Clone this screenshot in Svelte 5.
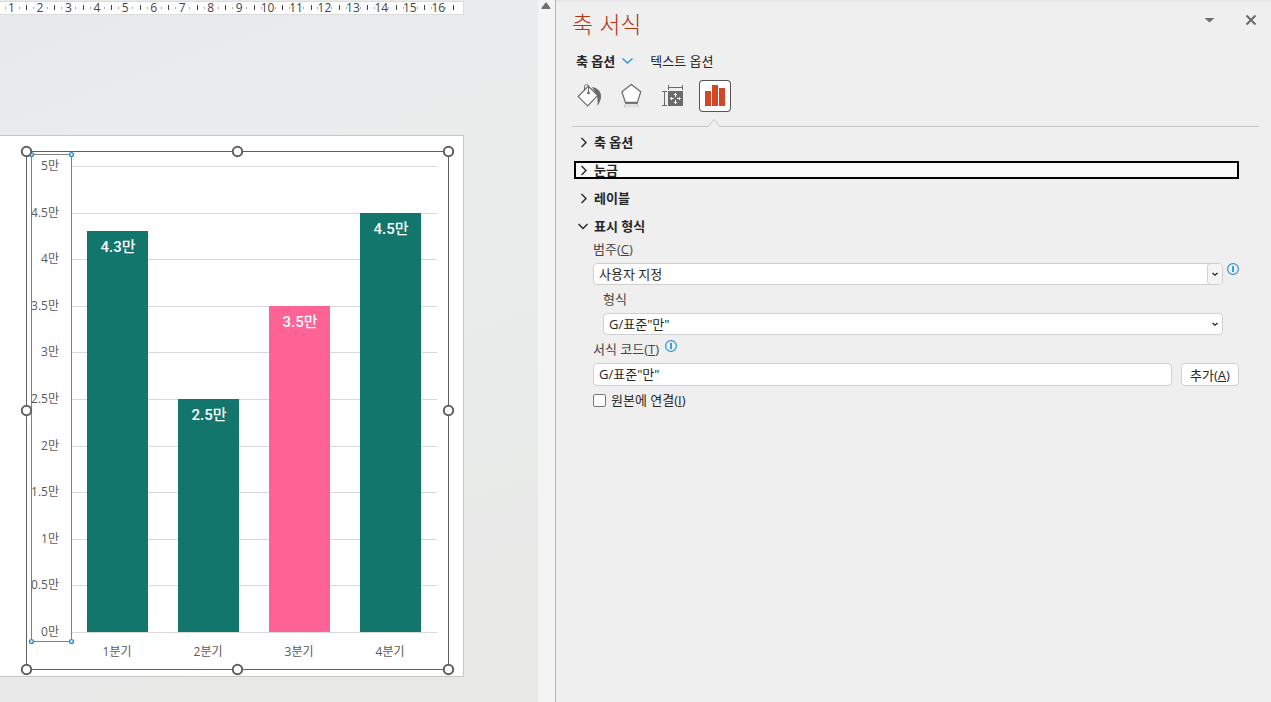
<script lang="ts">
  interface Bar { label: string; value: number; highlight?: boolean }

  const bars: Bar[] = [
    { label: '1분기', value: 4.3 },
    { label: '2분기', value: 2.5 },
    { label: '3분기', value: 3.5, highlight: true },
    { label: '4분기', value: 4.5 }
  ]
  const ticks = Array.from({ length: 11 }, (_, i) => i * 0.5)
  const marks = Array.from({ length: 16 }, (_, i) => i + 1)
  const handles = [[26, 15], [237, 15], [448, 15], [26, 274], [448, 274], [26, 533], [237, 533], [448, 533]]
  const axisHandles = [[31, 18], [71, 18], [31, 505], [71, 505]]

  // plot area of the chart, in slide pixels
  const base = 496
  const unit = 93.2
  const step = 91
  const y = (v: number) => Math.round(base - v * unit)
  const markX = (n: number) => 11.5 + (n - 1) * 28.45

  const closed = ['축 옵션', '눈금', '레이블']
  let category = $state('사용자 지정')
  let format = $state('G/표준"만"')
  let code = $state('G/표준"만"')
  let linked = $state(false)
</script>

{#snippet chevron(open: boolean)}
  <svg width="12" height="12" viewBox="0 0 12 12" fill="none" stroke="#262626" stroke-width="1.4">
    <path d={open ? 'M.5 4L5 8.500 9.500 4' : 'M3.500 2L8 6.500 3.500 11'} />
  </svg>
{/snippet}

{#snippet info()}
  <svg width="12" height="12" viewBox="0 0 12 12" fill="none" stroke="#2e93d1">
    <circle cx="6" cy="6" r="5.4" stroke-width="1.2" />
    <path d="M6 3v6" stroke-width="1.8" />
  </svg>
{/snippet}

{#snippet arrow()}
  <svg width="8" height="6" viewBox="0 0 8 6" fill="none" stroke="#222" stroke-width="1.3"><path d="M1.500 2L4 4.200 6.500 2" /></svg>
{/snippet}

<div class="app">
  <main class="work">
    <svg class="ruler" width="464" height="16" viewBox="0 0 464 16">
      <rect x="-1" y="1.5" width="464.5" height="13" fill="#fff" stroke="#dcdcdc" />
      {#each marks as n}
        <path d="M{Math.round(markX(n) - 7) + 0.5} 7v2M{Math.round(markX(n) + 7) + 0.5} 7v2" stroke="#aaa" />
        <path d="M{Math.floor(markX(n) + 15) + 0.5} 5v5" stroke="#444" />
        <text x={markX(n)} y="12" text-anchor="middle">{n}</text>
      {/each}
    </svg>

    <section class="slide">
      <svg width="463" height="540" viewBox="0 0 463 540">
        {#each ticks as t}
          <path d="M72 {y(t) + 0.5}H437" stroke="#d9d9d9" />
        {/each}
        <g fill="none" stroke="#606060">
          <rect x="26.5" y="15.5" width="422" height="518" />
          <rect x="31.5" y="18.5" width="40" height="487" stroke="#808080" />
        </g>
        {#each ticks as t}
          <text class="tick" x="59" y={y(t) + 4} text-anchor="end">{t}만</text>
        {/each}
        {#each bars as bar, i}
          <rect x={87 + i * step} y={y(bar.value)} width="61" height={base - y(bar.value)} fill={bar.highlight ? '#ff6295' : '#12766c'} />
          <text class="value" x={118 + i * step} y={y(bar.value) + 21} text-anchor="middle">{bar.value}만</text>
          <text class="tick" x={117 + i * step} y="520" text-anchor="middle">{bar.label}</text>
        {/each}
        {#each axisHandles as [cx, cy]}
          <circle cx={cx + 0.5} cy={cy + 0.5} r="1.9" fill="#fff" stroke="#2a8dd4" stroke-width="1.4" />
        {/each}
        {#each handles as [cx, cy]}
          <circle cx={cx + 0.5} cy={cy + 0.5} r="4.7" fill="#fff" stroke="#606060" stroke-width="2" />
        {/each}
      </svg>
    </section>
  </main>

  <div class="scroll">
    <svg width="10" height="8" viewBox="0 0 10 8"><path d="M5 0L9.500 6q.3 1-.7 1H1.200q-1 0-.7-1z" fill="#6e6e6e" /></svg>
  </div>

  <aside class="pane">
    <header>
      <h1>축 서식</h1>
      <button class="head-btn" aria-label="작업창 옵션">
        <svg width="16" height="16" viewBox="0 0 16 16"><path d="M3.500 6h10l-5 4.500z" fill="#6e6e6e" /></svg>
      </button>
      <button class="head-btn" aria-label="닫기">
        <svg width="16" height="16" viewBox="0 0 16 16"><path d="M3.500 3.500l9 9M12.500 3.500l-9 9" stroke="#6a6a6a" stroke-width="2" /></svg>
      </button>
    </header>

    <nav class="tabs">
      <button class="tab active">
        축 옵션
        <svg width="12" height="8" viewBox="0 0 12 8" fill="none" stroke="#2e93d1" stroke-width="1.4"><path d="M1.500 1.500l5 4.500 5-4.500" /></svg>
      </button>
      <button class="tab">텍스트 옵션</button>
    </nav>

    <div class="tools">
      <button class="tool" aria-label="채우기 및 선">
        <svg width="32" height="32" viewBox="0 0 32 32" fill="none" stroke="#6b6b6b">
          <path d="M19 7c6 1 9.500 5 9 10-.2 3-1.500 6-3.500 9 .2-4 .2-7-.5-10z" fill="#6b6b6b" stroke="none" />
          <path d="M15.300 6.200l9.300 9.100L14.700 26l-9.500-9.400z" fill="#fff" stroke-width="1.2" />
          <path d="M11.500 11V6.500c0-2.500 4-2.500 4 0V13" />
          <circle cx="15.500" cy="13" r="1.4" fill="#6b6b6b" stroke="none" />
        </svg>
      </button>
      <button class="tool" aria-label="효과">
        <svg width="32" height="32" viewBox="0 0 32 32" fill="none" stroke="#6b6b6b">
          <path d="M10.500 24h12l1 3.500h-14z" fill="#e2e2e2" stroke="none" />
          <path d="M10.300 24l-1 3.500M22.500 24l1 3.500" stroke="#c4c4c4" />
          <path d="M16.300 4.500l9.400 7.200L22.300 23H10.500L6.900 11.700z" fill="#fff" stroke-width="1.2" />
          <path d="M10.500 22.800h12" stroke-width="2" />
        </svg>
      </button>
      <button class="tool" aria-label="크기 및 속성">
        <svg width="32" height="32" viewBox="0 0 32 32" fill="none" stroke="#6b6b6b">
          <path d="M11.500 5v5M25.500 5v5M11.500 7.500h14M5 11.500h5M5 25.500h5M7.500 11.500v14" />
          <path d="M11 11h15v15H11z" fill="#6b6b6b" stroke="none" />
          <path d="M18.500 13.500V17M18.500 20v3.500M13.500 18.500H17M20 18.500h3.500M17 15l1.500-1.500L20 15M17 22l1.500 1.500L20 22M15 17l-1.500 1.500L15 20M22 17l1.500 1.500L22 20" stroke="#fff" />
        </svg>
      </button>
      <button class="tool active" aria-label="축 옵션">
        <svg width="32" height="32" viewBox="0 0 32 32" fill="#d24726"><path d="M6 11h6v15H6zM13 5h6v21h-6zM20 8h6v18h-6z" /></svg>
        <svg class="notch" width="14" height="9" viewBox="0 0 14 9" fill="#efefef" stroke="#c8c8c8"><path d="M1 9l6-8 6 8z" stroke="none" /><path d="M0 7.500h1L7 .5l6 7h1" /></svg>
      </button>
    </div>

    <div class="sections">
      {#each closed as name}
        <button class={['section', name === '눈금' && 'focused']} aria-expanded="false">{@render chevron(false)}{name}</button>
      {/each}
      <button class="section" aria-expanded="true">{@render chevron(true)}표시 형식</button>
    </div>

    <form class="fields">
      <label for="category">범주(<u>C</u>)</label>
      <div class="row">
        <div class="select split">
          <select id="category" bind:value={category}><option>사용자 지정</option></select>
          <span class="drop">{@render arrow()}</span>
        </div>
        {@render info()}
      </div>

      <label class="inset" for="format">형식</label>
      <div class="row inset">
        <div class="select">
          <select id="format" bind:value={format}><option>G/표준"만"</option></select>
          <span class="drop">{@render arrow()}</span>
        </div>
      </div>

      <div class="caption"><label for="code">서식 코드(<u>T</u>)</label>{@render info()}</div>
      <div class="row code">
        <input id="code" type="text" bind:value={code} />
        <button class="add" type="button">추가(<u>A</u>)</button>
      </div>

      <label class="check"><input type="checkbox" bind:checked={linked} /><span>원본에 연결(<u>I</u>)</span></label>
    </form>
  </aside>
</div>

<style>
  :global(body) { margin: 0; background: #efefef; }
  .app { display: grid; grid-template-columns: 538px 17px 1fr; min-height: 100vh; font-family: 'Open Sans', 'Noto Sans CJK KR', sans-serif; font-size: 13px; line-height: 18px; color: #262626; }
  button, input, select { font: inherit; color: inherit; box-sizing: border-box; }
  button { background: none; border: none; padding: 0; cursor: pointer; }
  svg { display: block; flex: none; }

  .work { background: linear-gradient(160deg, #e6eaec 0%, #ebeced 28%, #e9eceb 50%, #e8e8e6 100%); }
  .ruler text { font-size: 12px; fill: #444; }
  .slide { width: 463px; margin-top: 119px; background: #fff; border: 1px solid #c6c6c6; border-left: none; }
  .tick { font-size: 12px; fill: #595959; }
  .value { font-family: Roboto, 'Noto Sans CJK KR', sans-serif; font-size: 15px; font-weight: 500; fill: #fff; }

  .scroll { background: #f4f4f4; padding: 2px 0 0 3px; }

  .pane { border-left: 1px solid #b8b8b8; padding: 8px 12px 16px 16px; background: linear-gradient(#e4e4e4, #efefef 3px); }
  header { display: flex; gap: 26px; }
  h1 { flex: 1; margin: 0; font-size: 23px; font-weight: 300; line-height: 32px; color: #b7330f; }
  .head-btn { align-self: flex-start; margin-top: 4px; }

  .tabs { display: flex; gap: 17px; padding: 11px 4px 0; }
  .tab { display: flex; align-items: center; gap: 6px; line-height: 20px; }
  .tab.active { font-weight: 600; }

  .tools { display: flex; gap: 10px; padding: 9px 1px 14px; border-bottom: 1px solid #c8c8c8; }
  .tool { position: relative; width: 32px; height: 32px; border-radius: 4px; }
  .tool.active { background: #fff; box-shadow: inset 0 0 0 1px #555; }
  .notch { position: absolute; left: 8px; top: 39px; }

  .sections { display: flex; flex-direction: column; gap: 10px; padding: 6px 20px 0 2px; }
  .section { display: flex; align-items: center; gap: 4px; height: 18px; padding: 0 4px; font-weight: 600; text-align: left; }
  .section.focused { background: #fafafa; outline: 2px solid #000; outline-offset: -2px; }

  .fields { display: flex; flex-direction: column; gap: 5px; padding: 5px 20px 0 21px; }
  .fields label, .caption { color: #444; }
  .row { display: flex; gap: 4px; }
  .inset { margin-left: 10px; margin-right: 16px; }
  .select { position: relative; flex: 1; }
  select, input[type='text'] { display: block; width: 100%; height: 22px; padding: 0 5px; border: 1px solid #d0d0d0; border-radius: 4px; background: #fff; }
  select { appearance: none; }
  .drop { position: absolute; top: 1px; right: 1px; bottom: 1px; width: 14px; display: flex; align-items: center; justify-content: center; border-radius: 3px; pointer-events: none; }
  .split .drop { background: #f4f4f4; box-shadow: -1px 0 #d0d0d0; }
  .caption { display: flex; gap: 6px; padding-top: 1px; margin-top: -1px; }
  .row.code { gap: 9px; }
  .code input[type='text'] { flex: 1; height: 23px; padding-bottom: 2px; }
  .add { width: 58px; height: 23px; background: #fff; border: 1px solid #d0d0d0; border-radius: 4px; }
  .fields .check { display: flex; align-items: center; gap: 5px; color: #262626; }
  .check input { appearance: none; width: 13px; height: 13px; margin: 0; border: 1px solid #777; border-radius: 2px; background: #fff; }
  .check input:checked { background: #555; }
</style>
